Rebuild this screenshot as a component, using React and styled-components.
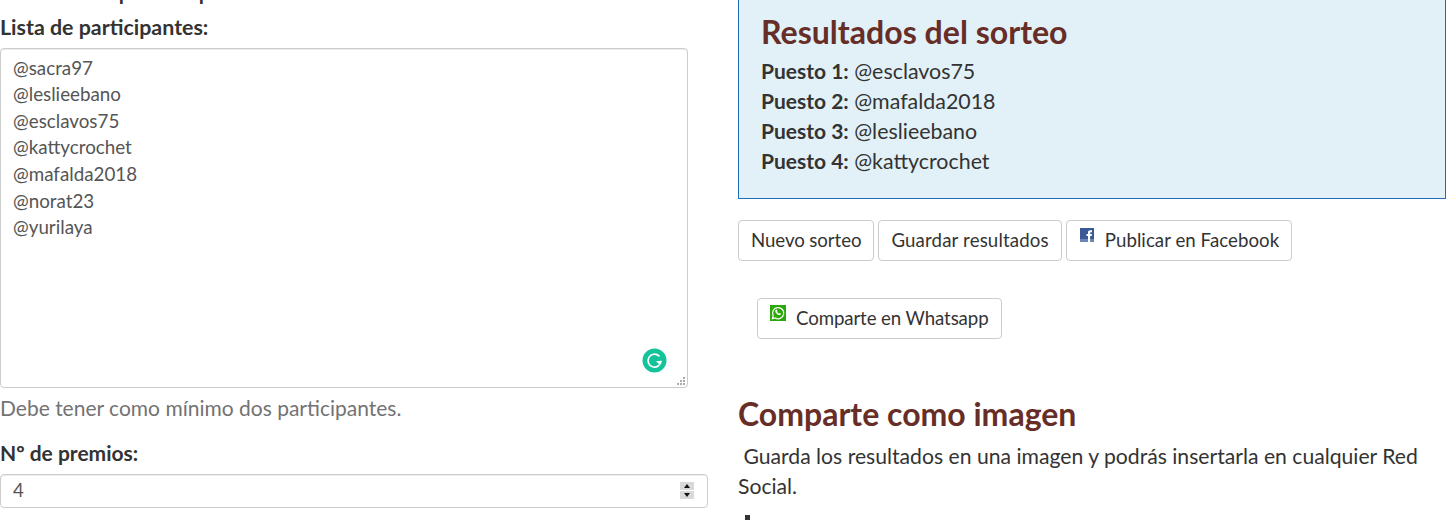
import React from "react";
import styled, { createGlobalStyle } from "styled-components";

const participantes = ["@sacra97", "@leslieebano", "@esclavos75", "@kattycrochet", "@mafalda2018", "@norat23", "@yurilaya"];

const resultados = [
  ["Puesto 1:", "@esclavos75"],
  ["Puesto 2:", "@mafalda2018"],
  ["Puesto 3:", "@leslieebano"],
  ["Puesto 4:", "@kattycrochet"],
];

const GlobalStyle = createGlobalStyle`
  html, body {
    margin: 0;
    height: 520px;
    overflow: hidden;
    background: #fff;
    font-family: Lato, "Open Sans", sans-serif;
    font-size: 21px;
    color: #333;
  }
`;

const Page = styled.div`
  display: grid;
  grid-template-columns: 708px 708px;
  column-gap: 30px;
  margin-top: -22px;
`;

const Column = styled.div`
  display: flex;
  flex-direction: column;
  align-items: flex-start;
`;

const Label = styled.label`
  display: block;
  font-weight: 700;
  font-size: 21px;
  line-height: 28px;
`;

const ListLabel = styled(Label)`
  margin-top: 7px;
  font-size: 21.4px;
`;

const TextBox = styled.div`
  position: relative;
  margin-top: 7px;
  width: 688px;
  height: 340px;
`;

const Textarea = styled.textarea`
  display: block;
  box-sizing: border-box;
  width: 100%;
  height: 100%;
  margin: 0;
  padding: 5.6px 12px 6px;
  border: 1px solid #ccc;
  border-radius: 4px;
  box-shadow: inset 0 1px 1px rgba(0, 0, 0, 0.075);
  font-family: inherit;
  font-size: 18.8px;
  line-height: 26.6px;
  color: #555;
  resize: none;
  outline: none;
`;

const GrammarlyBadge = styled.svg`
  position: absolute;
  right: 21px;
  bottom: 15px;
  width: 25px;
  height: 25px;
`;

const ResizeGrip = styled.svg`
  position: absolute;
  right: 3px;
  bottom: 2px;
  width: 9px;
  height: 9px;
`;

const HelpText = styled.p`
  margin: 6px 0 17px;
  color: #737373;
  font-size: 21px;
  line-height: 28px;
`;

const NumberBox = styled.div`
  position: relative;
  width: 708px;
  height: 34px;
  margin-top: 7px;
`;

const NumberInput = styled.input`
  display: block;
  box-sizing: border-box;
  width: 100%;
  height: 100%;
  margin: 0;
  padding: 5px 12px 7px;
  border: 1px solid #ccc;
  border-radius: 4px;
  box-shadow: inset 0 1px 1px rgba(0, 0, 0, 0.075);
  font-family: inherit;
  font-size: 18.67px;
  color: #555;
  outline: none;
  appearance: textfield;

  &::-webkit-inner-spin-button {
    display: none;
  }
`;

const Spinner = styled.div`
  position: absolute;
  top: 8px;
  right: 14px;
  display: flex;
  flex-direction: column;
  gap: 1px;
  width: 14px;
  height: 17px;
  background: #fff;
`;

const SpinArrow = styled.span`
  display: flex;
  align-items: center;
  justify-content: center;
  flex: 1;
  background: #d9d9d9;

  &::before {
    content: "";
    border-left: 3.5px solid transparent;
    border-right: 3.5px solid transparent;
    ${(p) => (p.$down ? "border-top: 4px solid #111;" : "border-bottom: 4px solid #111;")}
  }
`;

const ResultBox = styled.section`
  box-sizing: border-box;
  width: 708px;
  height: 221px;
  padding: 34px 21px 0 22px;
  background: #e1f1f7;
  border: 1px solid #1f6fb8;
`;

const BoxTitle = styled.h2`
  margin: 0 0 5px;
  font-size: 32.1px;
  font-weight: 700;
  line-height: 38px;
  color: #672d27;
`;

const ResultRow = styled.div`
  font-size: 21.4px;
  line-height: 30px;

  b {
    font-size: 21px;
    font-weight: 700;
  }
`;

const ButtonRow = styled.div`
  display: flex;
  gap: 4px;
  margin-top: 21px;
`;

const WhatsappRow = styled(ButtonRow)`
  margin-top: 37px;
  margin-left: 19px;
`;

const Button = styled.button`
  display: flex;
  align-items: center;
  box-sizing: border-box;
  height: 41px;
  padding: 0 12px 2px;
  background: #fff;
  border: 1px solid #ccc;
  border-radius: 4px;
  font-family: inherit;
  font-size: 18.67px;
  letter-spacing: ${(p) => p.$track || 0}px;
  color: #333;
`;

const ButtonIcon = styled.svg`
  flex: none;
  align-self: flex-start;
  margin-top: ${(p) => p.$top}px;
  margin-left: ${(p) => p.$left || 0}px;
  margin-right: ${(p) => p.$gap}px;
`;

const SectionTitle = styled.h2`
  margin: 56px 0 0;
  font-size: 32px;
  font-weight: 700;
  line-height: 38px;
  color: #672d27;
`;

const Paragraph = styled.p`
  margin: 8px 0 0;
  font-size: 21.16px;
  line-height: 30px;
`;

const StepRow = styled.div`
  display: flex;
  align-items: flex-start;
  gap: 21px;
  margin: 13px 0 0 1px;
  font-size: 21.2px;
  line-height: 30px;
`;

const StepIcon = styled.svg`
  flex: none;
  width: 16px;
  height: 20px;
  margin-top: 1px;
`;

const FacebookIcon = () => (
  <ButtonIcon $top={7} $left={1} $gap={11} width="14" height="14" viewBox="0 0 14 14">
    <rect width="14" height="14" fill="#3b5998" />
    <rect y="11" width="14" height="3" fill="#6d84b4" />
    <path d="M8 14V8H6.5V6H8V4.6C8 3 8.9 2.2 10.4 2.2H12V4.2H10.9C10.3 4.2 10.1 4.5 10.1 5V6H12L11.7 8H10.1V14Z" fill="#fff" />
  </ButtonIcon>
);

const WhatsappIcon = () => (
  <ButtonIcon $top={6} $gap={10} width="16" height="16" viewBox="0 0 16 16">
    <rect width="16" height="16" fill="#2ca80c" />
    <path d="M2.4 13.6l.8-2.9A5.6 5.6 0 1 1 5.4 13z" fill="none" stroke="#fff" strokeWidth="1.2" />
    <path d="M5.8 4.8c-.8.8-.7 2 .4 3.4 1.2 1.5 2.7 2.2 3.8 1.8.6-.2.9-.8.9-1.3L9.5 7.900l-.7.6c-.7-.3-1.4-1-1.800-1.900l.5-.7-.8-1.300c-.3 0-.6 0-.900.2z" fill="#fff" />
  </ButtonIcon>
);

export default function App() {
  return (
    <>
      <GlobalStyle />
      <Page>
        <Column>
          <Label>Nombres de premios para:</Label>
          <ListLabel>Lista de participantes:</ListLabel>
          <TextBox>
            <Textarea readOnly spellCheck={false} defaultValue={participantes.join("\n")} />
            <GrammarlyBadge viewBox="0 0 25 25">
              <circle cx="12.5" cy="12.500" r="12" fill="#15c39a" />
              <path d="M19 13.200a6.500 6.500 0 1 1-2-5.300" fill="none" stroke="#fff" strokeWidth="1.600" strokeLinecap="round" />
              <path d="M14 13h5l-1.200 4z" fill="#fff" />
            </GrammarlyBadge>
            <ResizeGrip viewBox="0 0 9 9">
              <g fill="#aaa">
                <rect x="7" y="0" width="2" height="2" />
                <rect x="4" y="3" width="2" height="2" />
                <rect x="7" y="3" width="2" height="2" />
                <rect x="1" y="6" width="2" height="2" />
                <rect x="4" y="6" width="2" height="2" />
                <rect x="7" y="6" width="2" height="2" />
              </g>
            </ResizeGrip>
          </TextBox>
          <HelpText>Debe tener como mínimo dos participantes.</HelpText>
          <Label>Nº de premios:</Label>
          <NumberBox>
            <NumberInput type="number" readOnly defaultValue={4} />
            <Spinner>
              <SpinArrow />
              <SpinArrow $down />
            </Spinner>
          </NumberBox>
        </Column>
        <Column>
          <ResultBox>
            <BoxTitle>Resultados del sorteo</BoxTitle>
            {resultados.map(([puesto, nombre]) => (
              <ResultRow key={puesto}>
                <b>{puesto}</b> {nombre}
              </ResultRow>
            ))}
          </ResultBox>
          <ButtonRow>
            <Button $track={-0.08}>Nuevo sorteo</Button>
            <Button $track={0.15}>Guardar resultados</Button>
            <Button $track={0.05}>
              <FacebookIcon />
              Publicar en Facebook
            </Button>
          </ButtonRow>
          <WhatsappRow>
            <Button $track={-0.1}>
              <WhatsappIcon />
              Comparte en Whatsapp
            </Button>
          </WhatsappRow>
          <SectionTitle>Comparte como imagen</SectionTitle>
          <Paragraph>
            &nbsp;Guarda los resultados en una imagen y podrás insertarla en cualquier Red Social.
          </Paragraph>
          <StepRow>
            <StepIcon viewBox="0 0 16 20">
              <path d="M6 0h5v8h4l-6.500 7L2 8h4z" fill="#333" />
            </StepIcon>
            Descarga la imagen del sorteo
          </StepRow>
        </Column>
      </Page>
    </>
  );
}
